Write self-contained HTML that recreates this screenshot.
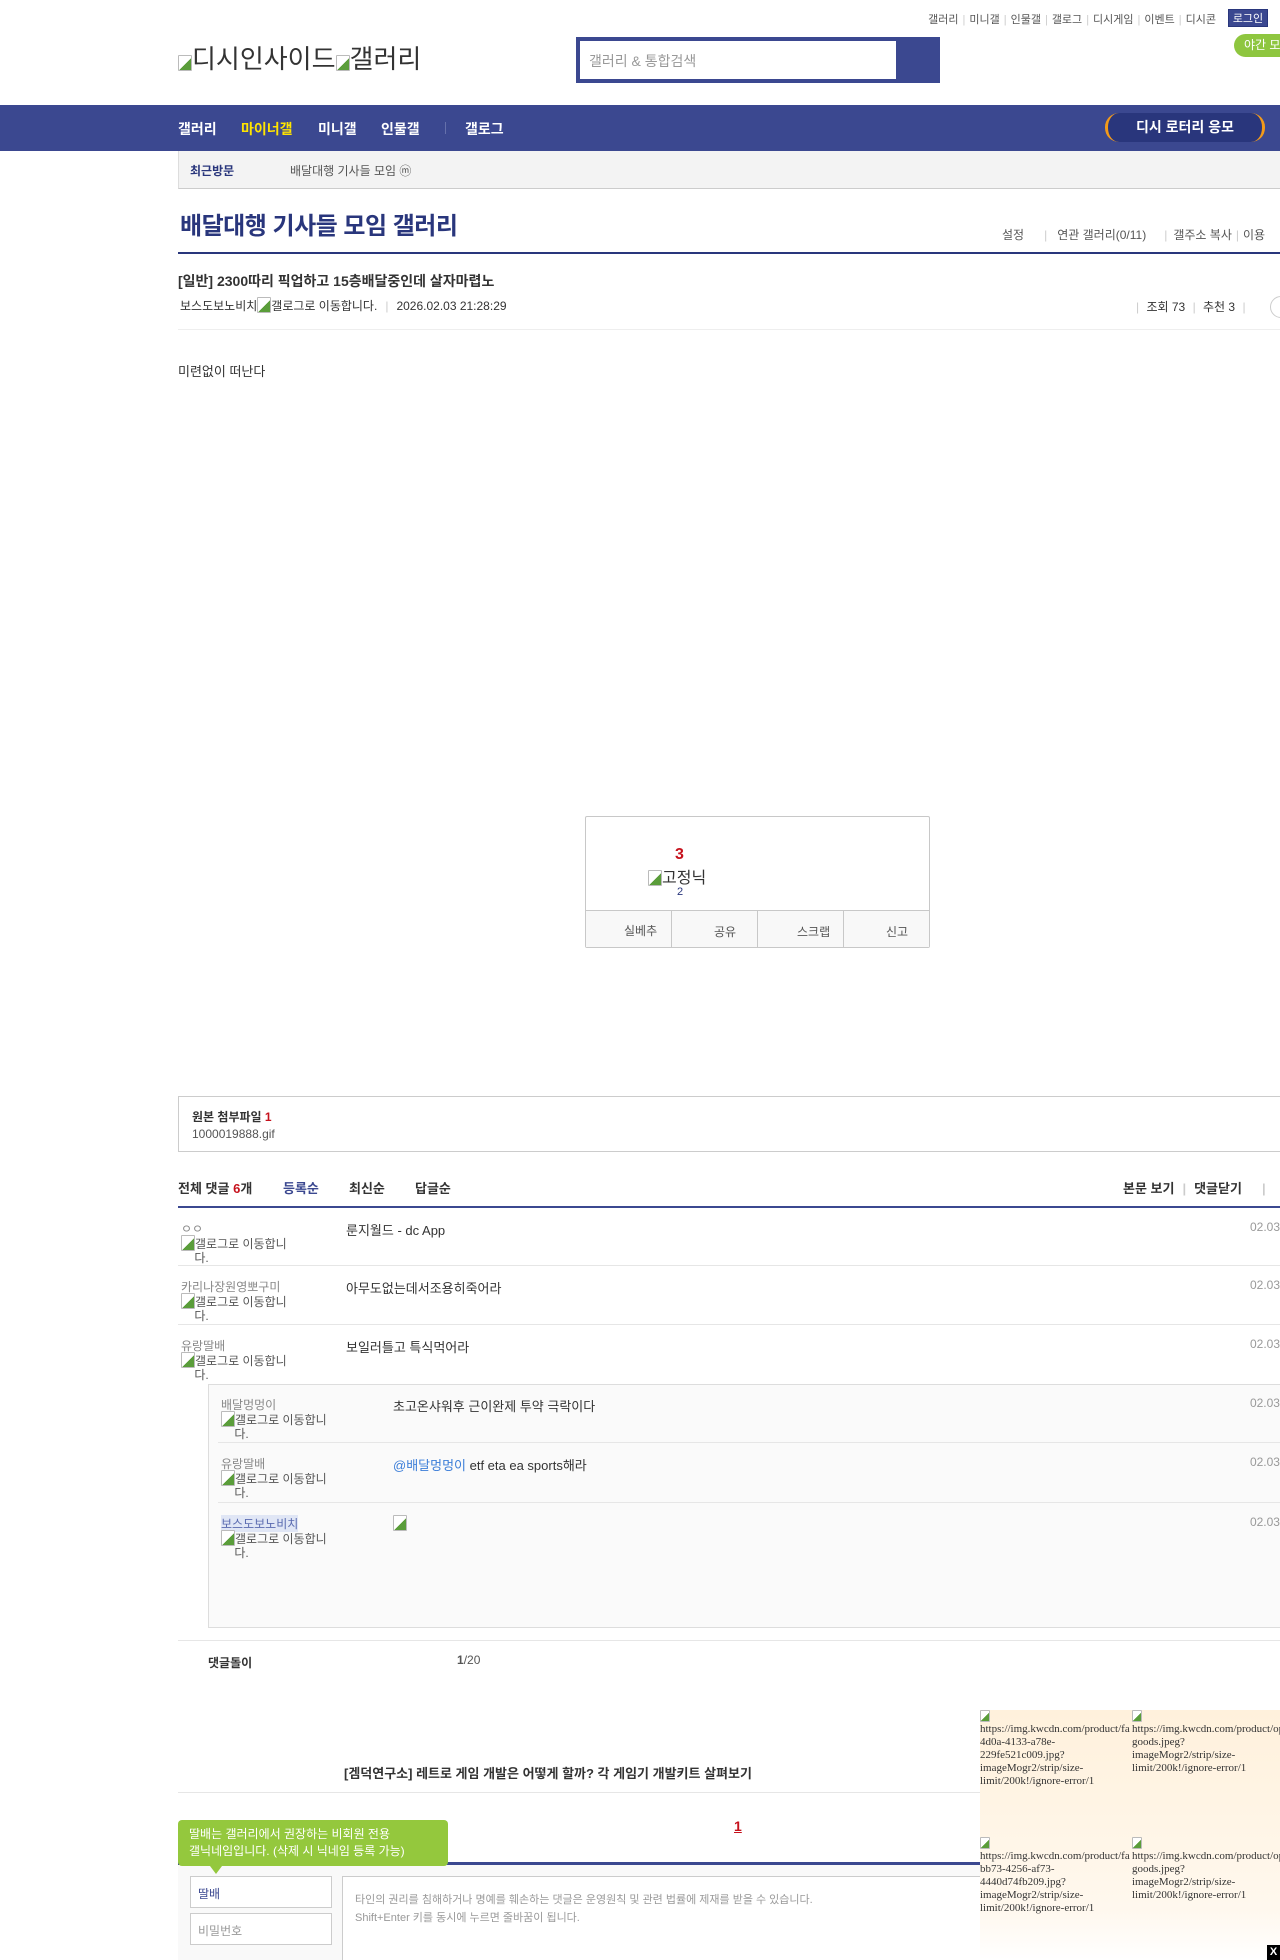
<!DOCTYPE html>
<html><head><meta charset="utf-8">
<style>
*{margin:0;padding:0;box-sizing:border-box}
html,body{width:1280px;height:1960px;overflow:hidden;background:#fff}
body{font-family:"Liberation Sans","Noto Sans CJK KR",sans-serif;font-size:12px;color:#333;position:relative}
.a{position:absolute;white-space:nowrap}
.sep{color:#ccc;margin:0 4px}
.bi{display:inline-block;width:14px;height:16px;border:1px solid #bbb;border-radius:1px;vertical-align:-3px;background:linear-gradient(135deg,#fff 55%,#5a9d3a 55%)}
.cmt{position:absolute;left:178px;width:1102px;border-bottom:1px solid #e6e6e6}
.nick{position:absolute;left:3px;top:12px;color:#888;font-size:12px;white-space:nowrap}
.gl{position:absolute;left:3px;top:27px;font-size:12px;color:#555;line-height:14px;width:125px}
.txt{position:absolute;top:12px;font-size:13px;color:#333;white-space:nowrap}
.dt{position:absolute;right:0;top:12px;color:#999;font-size:12px}
</style></head><body>

<div class="a" style="right:64px;top:11px;font-size:11px;color:#555">갤러리<span class="sep">|</span>미니갤<span class="sep">|</span>인물갤<span class="sep">|</span>갤로그<span class="sep">|</span>디시게임<span class="sep">|</span>이벤트<span class="sep">|</span>디시콘</div>
<div class="a" style="left:1228px;top:9px;width:40px;height:18px;background:#3b4890;color:#fff;font-size:11px;text-align:center;line-height:18px;border:1px solid #29367c">로그인</div>
<div class="a" style="left:1234px;top:34px;width:60px;height:23px;background:#8ec63f;color:#fff;font-size:12px;line-height:23px;padding-left:10px;border-radius:12px 0 0 12px">야간 모드</div>

<div class="a" style="left:178px;top:39px;font-size:26px;color:#333"><span class="bi"></span>디시인사이드<span class="bi"></span>갤러리</div>

<div class="a" style="left:576px;top:37px;width:364px;height:46px;background:#3b4890"></div>
<div class="a" style="left:580px;top:41px;width:316px;height:38px;background:#fff;padding:10px 9px;font-size:14px;color:#999">갤러리 &amp; 통합검색</div>

<div class="a" style="left:0;top:105px;width:1280px;height:46px;background:#3b4890"></div>
<div class="a" style="left:178px;top:119px;font-size:14px;font-weight:bold;color:#fff">갤러리</div>
<div class="a" style="left:241px;top:119px;font-size:14px;font-weight:bold;color:#ffe400">마이너갤</div>
<div class="a" style="left:318px;top:119px;font-size:14px;font-weight:bold;color:#fff">미니갤</div>
<div class="a" style="left:381px;top:119px;font-size:14px;font-weight:bold;color:#fff">인물갤</div>
<div class="a" style="left:445px;top:122px;width:1px;height:12px;background:#6570ab"></div>
<div class="a" style="left:465px;top:119px;font-size:14px;font-weight:bold;color:#fff">갤로그</div>
<div class="a" style="left:1105px;top:113px;width:160px;height:29px;background:#29367c;border-left:3px solid #f29a1a;border-right:3px solid #f29a1a;border-radius:14px;color:#fff;font-size:14px;font-weight:bold;text-align:center;line-height:28px">디시 로터리 응모</div>

<div class="a" style="left:178px;top:151px;width:1102px;height:38px;background:#f3f3f3;border-left:1px solid #ddd;border-bottom:1px solid #ccc"></div>
<div class="a" style="left:190px;top:162px;font-size:12px;font-weight:bold;color:#29367c">최근방문</div>
<div class="a" style="left:290px;top:162px;font-size:12px;color:#555">배달대행 기사들 모임 ⓜ</div>

<div class="a" style="left:180px;top:206px;font-size:24px;color:#29367c;font-weight:bold;letter-spacing:-0.5px">배달대행 기사들 모임 갤러리</div>
<div class="a" style="left:1002px;top:226px;font-size:12px;color:#555">설정<span class="sep" style="margin:0 10px 0 20px">|</span>연관 갤러리(0/11)<span class="sep" style="margin:0 6px 0 18px">|</span>갤주소 복사<span class="sep">|</span>이용</div>
<div class="a" style="left:178px;top:252px;width:1102px;height:2px;background:#29367c"></div>

<div class="a" style="left:178px;top:271px;font-size:14px;font-weight:bold;color:#333">[일반] 2300따리 픽업하고 15층배달중인데 살자마렵노</div>
<div class="a" style="left:180px;top:297px;font-size:12px;color:#333">보스도보노비치<span class="bi"></span>갤로그로 이동합니다.<span class="sep" style="margin:0 8px">|</span>2026.02.03 21:28:29</div>
<div class="a" style="left:1132px;top:298px;font-size:12px;color:#333"><span class="sep">|</span> 조회 73 <span class="sep">|</span> 추천 3 <span class="sep">|</span></div>
<div class="a" style="left:1270px;top:296px;width:30px;height:22px;border:1px solid #ccc;border-radius:11px"></div>
<div class="a" style="left:178px;top:329px;width:1102px;height:1px;background:#eee"></div>
<div class="a" style="left:178px;top:361px;font-size:13px;color:#333">미련없이 떠난다</div>

<div class="a" style="left:585px;top:816px;width:345px;height:132px;border:1px solid #c8c8c8;border-radius:2px;background:#fff"></div>
<div class="a" style="left:675px;top:846px;font-size:16px;font-weight:bold;color:#c6111c">3</div>
<div class="a" style="left:648px;top:864px;font-size:16px;color:#333"><span class="bi"></span>고정닉</div>
<div class="a" style="left:677px;top:886px;font-size:11px;color:#29367c">2</div>
<div class="a" style="left:586px;top:910px;width:343px;height:37px;background:#f8f8f8;border-top:1px solid #c8c8c8"></div>
<div class="a" style="left:671px;top:911px;width:1px;height:36px;background:#c8c8c8"></div>
<div class="a" style="left:757px;top:911px;width:1px;height:36px;background:#c8c8c8"></div>
<div class="a" style="left:843px;top:911px;width:1px;height:36px;background:#c8c8c8"></div>
<div class="a" style="left:624px;top:922px;font-size:12px;color:#555">실베추</div>
<div class="a" style="left:714px;top:923px;font-size:12px;color:#555">공유</div>
<div class="a" style="left:797px;top:923px;font-size:12px;color:#555">스크랩</div>
<div class="a" style="left:886px;top:923px;font-size:12px;color:#555">신고</div>

<div class="a" style="left:178px;top:1096px;width:1110px;height:56px;border:1px solid #ccc"></div>
<div class="a" style="left:192px;top:1108px;font-size:12px;font-weight:bold;color:#333">원본 첨부파일 <span style="color:#c6111c">1</span></div>
<div class="a" style="left:192px;top:1127px;font-size:12px;color:#555">1000019888.gif</div>

<div class="a" style="left:178px;top:1178px;font-size:13px;font-weight:bold;color:#333">전체 댓글 <span style="color:#c6111c">6</span>개</div>
<div class="a" style="left:283px;top:1178px;font-size:13px;font-weight:bold;color:#3b4890">등록순</div>
<div class="a" style="left:349px;top:1178px;font-size:13px;font-weight:bold;color:#333">최신순</div>
<div class="a" style="left:415px;top:1178px;font-size:13px;font-weight:bold;color:#333">답글순</div>
<div class="a" style="left:1123px;top:1178px;font-size:13px;font-weight:bold;color:#333">본문 보기<span class="sep" style="margin:0 8px">|</span>댓글닫기<span class="sep" style="margin:0 20px">|</span></div>
<div class="a" style="left:178px;top:1206px;width:1102px;height:2px;background:#3b4890"></div>

<div class="cmt" style="top:1208px;height:58px"><div class="nick">ㅇㅇ</div><div class="gl"><span class="bi"></span>갤로그로 이동합니<br>&nbsp;&nbsp;&nbsp;&nbsp;다.</div><div class="txt" style="left:168px">룬지월드 - dc App</div><div class="dt">02.03</div></div>
<div class="cmt" style="top:1266px;height:59px"><div class="nick">카리나장원영뽀구미</div><div class="gl"><span class="bi"></span>갤로그로 이동합니<br>&nbsp;&nbsp;&nbsp;&nbsp;다.</div><div class="txt" style="left:168px">아무도없는데서조용히죽어라</div><div class="dt">02.03</div></div>
<div class="cmt" style="top:1325px;height:59px;border-bottom:none"><div class="nick">유랑딸배</div><div class="gl"><span class="bi"></span>갤로그로 이동합니<br>&nbsp;&nbsp;&nbsp;&nbsp;다.</div><div class="txt" style="left:168px">보일러틀고 특식먹어라</div><div class="dt">02.03</div></div>

<div class="a" style="left:208px;top:1384px;width:1080px;height:244px;background:#fafafa;border:1px solid #ddd;border-right:none"></div>
<div class="cmt" style="left:218px;width:1062px;top:1384px;height:59px"><div class="nick">배달멍멍이</div><div class="gl"><span class="bi"></span>갤로그로 이동합니<br>&nbsp;&nbsp;&nbsp;&nbsp;다.</div><div class="txt" style="left:175px">초고온샤워후 근이완제 투약 극락이다</div><div class="dt" style="right:-10px">02.03 2</div></div>
<div class="cmt" style="left:218px;width:1062px;top:1443px;height:60px"><div class="nick">유랑딸배</div><div class="gl"><span class="bi"></span>갤로그로 이동합니<br>&nbsp;&nbsp;&nbsp;&nbsp;다.</div><div class="txt" style="left:175px"><span style="color:#3b7dd8">@배달멍멍이</span> etf eta ea sports해라</div><div class="dt" style="right:-10px">02.03 2</div></div>
<div class="cmt" style="left:218px;width:1062px;top:1503px;height:124px;border-bottom:none"><div class="nick" style="background:#e0e6f5;color:#5a6bb0">보스도보노비치</div><div class="gl"><span class="bi"></span>갤로그로 이동합니<br>&nbsp;&nbsp;&nbsp;&nbsp;다.</div><div class="txt" style="left:175px"><span class="bi"></span></div><div class="dt" style="right:-10px">02.03 2</div></div>

<div class="a" style="left:178px;top:1640px;width:1102px;height:1px;background:#e6e6e6"></div>
<div class="a" style="left:208px;top:1654px;font-size:12px;font-weight:bold;color:#333">댓글돌이</div>
<div class="a" style="left:457px;top:1653px;font-size:12px;color:#555"><b>1</b>/20</div>

<div class="a" style="left:344px;top:1763px;font-size:13px;font-weight:bold;color:#333">[겜덕연구소] 레트로 게임 개발은 어떻게 할까? 각 게임기 개발키트 살펴보기</div>
<div class="a" style="left:178px;top:1792px;width:802px;height:1px;background:#e6e6e6"></div>
<div class="a" style="left:734px;top:1818px;font-size:14px;font-weight:bold;color:#c6111c;text-decoration:underline">1</div>

<div class="a" style="left:178px;top:1862px;width:802px;height:3px;background:#3b4890"></div>
<div class="a" style="left:178px;top:1865px;width:1102px;height:95px;background:#f9f9f9"></div>
<div class="a" style="left:178px;top:1820px;width:270px;height:46px;background:#94c83d;border-radius:4px;color:#fff;font-size:12px;line-height:17px;padding:6px 11px">딸배는 갤러리에서 권장하는 비회원 전용<br>갤닉네임입니다. (삭제 시 닉네임 등록 가능)</div>
<div class="a" style="left:210px;top:1866px;width:0;height:0;border-left:6px solid transparent;border-right:6px solid transparent;border-top:8px solid #94c83d"></div>
<div class="a" style="left:190px;top:1876px;width:142px;height:32px;border:1px solid #ccc;background:#fff;padding:8px 7px;font-size:12px;color:#3b4890">딸배</div>
<div class="a" style="left:190px;top:1913px;width:142px;height:32px;border:1px solid #ccc;background:#fff;padding:8px 7px;font-size:12px;color:#999">비밀번호</div>
<div class="a" style="left:342px;top:1876px;width:700px;height:90px;border:1px solid #ccc;background:#fff;padding:14px 12px;font-size:11px;line-height:18px;color:#999">타인의 권리를 침해하거나 명예를 훼손하는 댓글은 운영원칙 및 관련 법률에 제재를 받을 수 있습니다.<br>Shift+Enter 키를 동시에 누르면 줄바꿈이 됩니다.</div>

<div class="a" style="left:980px;top:1710px;width:300px;height:250px;background:linear-gradient(#fff1dc,#fff8ee 80%,#fff);font-family:'Liberation Serif',serif;font-size:11px;line-height:13px;color:#333;overflow:hidden">
<div style="position:absolute;left:0;top:0;width:150px;overflow:hidden"><span class="bi" style="width:10px;height:12px"></span><br>https://img.kwcdn.com/product/fancy/<br>4d0a-4133-a78e-<br>229fe521c009.jpg?<br>imageMogr2/strip/size-<br>limit/200k!/ignore-error/1</div>
<div style="position:absolute;left:152px;top:0;width:150px;overflow:hidden"><span class="bi" style="width:10px;height:12px"></span><br>https://img.kwcdn.com/product/open/<br>goods.jpeg?<br>imageMogr2/strip/size-<br>limit/200k!/ignore-error/1</div>
<div style="position:absolute;left:0;top:127px;width:150px;overflow:hidden"><span class="bi" style="width:10px;height:12px"></span><br>https://img.kwcdn.com/product/fancy/<br>bb73-4256-af73-<br>4440d74fb209.jpg?<br>imageMogr2/strip/size-<br>limit/200k!/ignore-error/1</div>
<div style="position:absolute;left:152px;top:127px;width:150px;overflow:hidden"><span class="bi" style="width:10px;height:12px"></span><br>https://img.kwcdn.com/product/open/<br>goods.jpeg?<br>imageMogr2/strip/size-<br>limit/200k!/ignore-error/1</div>
</div>
<div class="a" style="left:1267px;top:1945px;width:13px;height:15px;background:#000;color:#fff;font-size:11px;font-weight:bold;text-align:center;line-height:15px">X</div>
</body></html>
